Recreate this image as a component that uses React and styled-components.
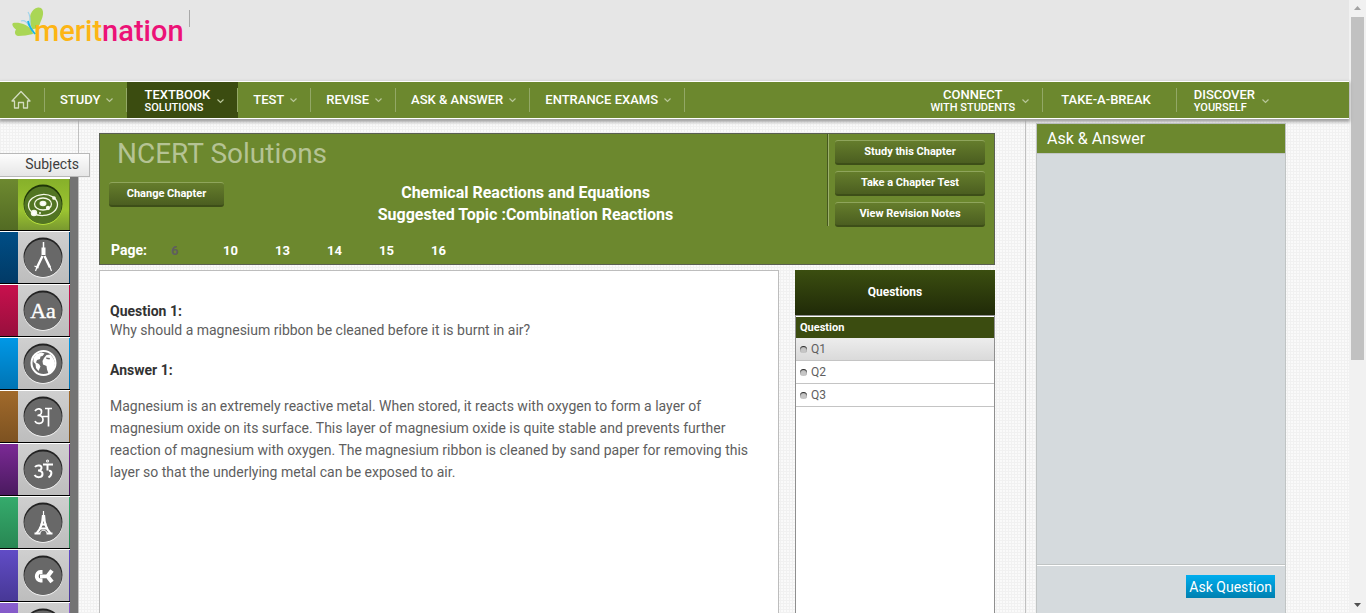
import React from "react";
import styled, { createGlobalStyle, css } from "styled-components";

const green = "#6c882e";
const darkGreen = "#3b4c10";

const Global = createGlobalStyle`
  *, *::before, *::after { box-sizing: border-box; }
  html, body { margin: 0; padding: 0; }
  body { font-family: Roboto, "Liberation Sans", sans-serif; font-size: 14px; color: #5e5e5e; overflow: hidden; }
  button { font-family: inherit; cursor: pointer; }
  a { color: inherit; text-decoration: none; }
`;

const Window = styled.div`
  display: flex;
  height: 100vh;
  overflow: hidden;
`;

const Page = styled.div`
  flex: 1;
  min-width: 0;
  display: flex;
  flex-direction: column;
  background-color: #fafafa;
  background-image: linear-gradient(#f1f1f1 1px, transparent 1px),
    linear-gradient(90deg, #f1f1f1 1px, transparent 1px);
  background-size: 3px 3px;
`;

/* ---------- header ---------- */

const Header = styled.header`
  flex: none;
  display: flex;
  align-items: flex-start;
  height: 81px;
  padding: 7px 12px;
  background: #e6e6e6;
`;

const LogoLink = styled.a`
  display: flex;
  align-items: flex-start;
`;

const Butterfly = styled.svg`
  flex: none;
  width: 36px;
  height: 36px;
  margin-right: -14px;
`;

const Wordmark = styled.span`
  position: relative;
  font-size: 29px;
  font-weight: 500;
  line-height: 48px;
  color: #fdb515;
`;

const WordmarkEnd = styled.span`
  color: #ec1277;
`;

const LogoRule = styled.span`
  width: 1px;
  height: 17px;
  margin: 3px 0 0 5px;
  background: #a8a8a8;
`;

/* ---------- navigation ---------- */

const Nav = styled.nav`
  flex: none;
  display: flex;
  justify-content: space-between;
  height: 38px;
  padding-right: 66px;
  background: ${green};
  border-top: 1px solid #fff;
  border-bottom: 1px solid #fff;
  box-shadow: 0 2px 3px 1px #a2a2a2;
  z-index: 1;
`;

const NavGroup = styled.div`
  display: flex;
`;

const NavItem = styled.a`
  position: relative;
  display: flex;
  align-items: center;
  gap: 6px;
  height: 36px;
  padding: 0 14px 1px 15px;
  color: #fff;
  font-size: 13px;
  font-weight: 500;
  line-height: 13px;
  white-space: nowrap;
  &::after {
    content: "";
    position: absolute;
    right: 0;
    top: 6px;
    width: 1px;
    height: 24px;
    background: #93a866;
  }
  ${(p) => p.$wide && css`gap: 7px; padding: 2px 14px 0 17px;`}
  ${(p) => p.$plain && css`padding: 0 26px 1px 18px;`}
  ${(p) => p.$home && css`padding: 0 13px 0 11px;`}
  ${(p) => p.$last && css`&::after { display: none; }`}
  ${(p) => p.$active && css`background: ${darkGreen};`}
`;

const NavText = styled.span`
  text-align: ${(p) => (p.$center ? "center" : "left")};
`;

const NavSub = styled.small`
  display: block;
  font-size: 11px;
  line-height: 14px;
`;

const Chevron = () => (
  <svg width="7" height="6" viewBox="0 0 7 6" aria-hidden="true">
    <path d="M0.5 1.5 L3.5 4.5 L6.5 1.5" fill="none" stroke="#b9c79a" strokeWidth="1.2" />
  </svg>
);

/* ---------- body columns ---------- */

const Columns = styled.div`
  flex: 1;
  min-height: 0;
  display: flex;
  padding-right: 63px;
`;

const SubjectsColumn = styled.aside`
  flex: none;
  width: 79px;
  padding-top: 34px;
  border-right: 1px solid #c0c0c0;
`;

const SubjectsTab = styled.h2`
  position: relative;
  width: 90px;
  height: 24px;
  margin: 0;
  padding-right: 10px;
  border: 1px solid #b8b8b8;
  border-left: 0;
  background: linear-gradient(#fdfdfd, #e6e6e6);
  color: #3d3d3d;
  font-size: 14px;
  font-weight: 400;
  line-height: 21px;
  text-align: right;
`;

const SubjectList = styled.ul`
  margin: 0;
  padding: 2px 8px 0 0;
  list-style: none;
  background: linear-gradient(90deg, #fff 70px, #747474 70px);
`;

const SubjectLink = styled.a`
  display: flex;
  height: 52px;
  margin-bottom: 1px;
  border-bottom: 1px solid #000;
  background: ${(p) => p.$fill};
`;

const SubjectIcon = styled.svg`
  width: 51px;
  height: 51px;
  margin-left: 18px;
  background: ${(p) =>
    p.$active
      ? "linear-gradient(#86b02a, #9cc531 60%, #79992f)"
      : "linear-gradient(#cfcfcf, #bdbdbd)"};
`;

const Main = styled.main`
  flex: 1;
  min-width: 0;
  display: flex;
  flex-direction: column;
  gap: 5px;
  padding: 14px 30px 0 20px;
`;

/* ---------- chapter banner ---------- */

const Banner = styled.section`
  flex: none;
  display: flex;
  align-items: flex-start;
  height: 132px;
  border: 1px solid #5a5f52;
  background: ${green};
  color: #fff;
`;

const BannerInfo = styled.div`
  flex: 1;
  padding: 0 0 0 9px;
`;

const BannerTitle = styled.h1`
  margin: 0;
  padding-left: 8px;
  color: #b5c394;
  font-size: 28px;
  font-weight: 400;
  line-height: 40px;
`;

const BannerRow = styled.div`
  display: flex;
  align-items: flex-start;
  padding-top: 8px;
`;

const Topic = styled.h2`
  flex: 1;
  margin: 0;
  font-size: 16px;
  font-weight: 700;
  line-height: 22px;
  text-align: center;
`;

const Pages = styled.div`
  display: flex;
  align-items: baseline;
  padding: 13px 0 0 2px;
  font-weight: 700;
  line-height: 22px;
`;

const PagesLabel = styled.span`
  width: 60px;
`;

const PageLink = styled.a`
  width: 52px;
  font-size: 13px;
  color: ${(p) => (p.$current ? "#5f5f5f" : "#fff")};
`;

const BannerActions = styled.div`
  display: flex;
  flex-direction: column;
  gap: 6px;
  height: 92px;
  padding: 6px 9px 0 7px;
  border-left: 1px solid #46581e;
  box-shadow: inset 1px 0 #9cb06c;
`;

const GreenButton = styled.button`
  flex: none;
  width: ${(p) => (p.$narrow ? "115px" : "150px")};
  height: 25px;
  padding: 0;
  border: 0;
  border-top: 1px solid #8fa55c;
  border-bottom: 2px solid #3d4e18;
  border-radius: 3px;
  background: linear-gradient(#657d2c, #4b5e20);
  color: #fff;
  font-size: 11px;
  font-weight: 700;
  line-height: 22px;
`;

/* ---------- question and answer ---------- */

const Work = styled.div`
  flex: 1;
  min-height: 0;
  display: flex;
  gap: 16px;
`;

const Solution = styled.article`
  flex: 1;
  min-width: 0;
  padding: 31px 10px 0;
  border: 1px solid #bdbdbd;
  border-bottom: 0;
  background: #fff;
  line-height: 19px;
`;

const SolutionTitle = styled.h3`
  margin: 0;
  color: #333;
  font-size: 14px;
  font-weight: 700;
`;

const QuestionText = styled.p`
  margin: 0 0 21px;
`;

const AnswerText = styled.p`
  max-width: 640px;
  margin: 15px 0 0;
  line-height: 22px;
`;

const QuestionPanel = styled.section`
  flex: none;
  width: 200px;
  display: flex;
  flex-direction: column;
`;

const QuestionPanelTitle = styled.h2`
  margin: 0;
  background: linear-gradient(#3b4e10, #202a08);
  color: #fff;
  font-size: 12px;
  font-weight: 700;
  line-height: 45px;
  text-align: center;
`;

const QuestionPanelBody = styled.div`
  flex: 1;
  padding-top: 1px;
  border: 1px solid #8f8f8f;
  border-bottom: 0;
  background: #fff;
`;

const QuestionTable = styled.table`
  width: 100%;
  border-collapse: separate;
  border-spacing: 0;
`;

const QuestionHead = styled.th`
  height: 21px;
  padding: 0 4px;
  background: ${darkGreen};
  color: #fff;
  font-size: 11px;
  font-weight: 700;
  text-align: left;
`;

const QuestionCell = styled.td`
  height: 23px;
  padding: 0 4px;
  border-bottom: 1px solid #c4c4c4;
  background: ${(p) => (p.$selected ? "linear-gradient(#ededed, #dadada)" : "#fff")};
  font-size: 12px;
  line-height: 20px;
`;

const QuestionLabel = styled.label`
  display: flex;
  align-items: center;
  gap: 4px;
`;

const Bullet = styled.input`
  appearance: none;
  width: 7px;
  height: 7px;
  margin: 0;
  border-radius: 50%;
  background: #c6c6c6;
  box-shadow: inset 0 1px 1px #222;
`;

/* ---------- ask & answer ---------- */

const AskColumn = styled.aside`
  flex: none;
  display: flex;
  padding: 4px 0 0 10px;
  border-left: 1px solid #c0c0c0;
`;

const AskPanel = styled.section`
  display: flex;
  flex-direction: column;
  width: 250px;
  border: 1px solid #c0c4c4;
  border-bottom: 0;
  background: #d5dadd;
`;

const AskTitle = styled.h2`
  margin: 0;
  padding-left: 10px;
  border-bottom: 1px solid #c0c4c4;
  background: ${green};
  color: #fff;
  font-size: 16px;
  font-weight: 400;
  line-height: 29px;
`;

const AskFeed = styled.div`
  flex: 1;
`;

const AskFooter = styled.div`
  display: flex;
  align-items: flex-start;
  justify-content: flex-end;
  height: 49px;
  padding: 10px 10px 0;
  border-top: 1px solid #c0c4c4;
  box-shadow: inset 0 1px #fff;
`;

const AskButton = styled.button`
  height: 23px;
  padding: 0 3px;
  border: 0;
  background: linear-gradient(#00aeef, #0080b0);
  color: #fff;
  font-size: 14px;
  line-height: 22px;
`;

/* ---------- window scroll bar ---------- */

const ScrollTrack = styled.div`
  flex: none;
  display: flex;
  flex-direction: column;
  align-items: center;
  justify-content: space-between;
  width: 17px;
  background: #f1f1f1;
`;

const ScrollThumb = styled.div`
  width: 13px;
  height: 56vh;
  margin-bottom: auto;
  background: #c1c1c1;
`;

const ScrollArrow = ({ down }) => (
  <svg width="17" height="17" viewBox="0 0 17 17" aria-hidden="true">
    <path d={down ? "M5 7h7l-3.500 4z" : "M5 10h7l-3.500-4z"} fill={down ? "#505050" : "#a3a3a3"} />
  </svg>
);

/* ---------- data ---------- */

const glyphs = {
  orbit: (
    <g fill="none" stroke="#f4f8e6" strokeWidth="1.3">
      <ellipse cx="25" cy="26" rx="14.500" ry="10.500" transform="rotate(-4 25 26)" />
      <ellipse cx="25" cy="25" rx="8.500" ry="6" />
      <ellipse cx="25" cy="24.500" rx="2.800" ry="2" fill="#fff" />
      <circle cx="16" cy="34" r="2.600" fill="#fff" />
      <circle cx="36" cy="19" r="1.200" fill="#fff" />
      <circle cx="30" cy="29" r="1.500" fill="#fff" />
      <circle cx="22" cy="34" r="0.400" fill="#fff" />
    </g>
  ),
  compass: (
    <g fill="none" stroke="#fff">
      <path d="M25.500 10v6" strokeWidth="1.500" />
      <path d="M25.500 15.500v7.500" strokeWidth="4" />
      <path d="M24.500 24l-5.500 11.500M26.500 24l5.500 11.500" strokeWidth="2.400" />
      <path d="M19 35l-1.500 4M32 35l1.500 4M16.500 34l4 2" strokeWidth="1.200" />
    </g>
  ),
  latin: (
    <text x="25" y="33" textAnchor="middle" fill="#fff" stroke="#fff" strokeWidth="0.4" fontFamily="Liberation Serif, serif" fontSize="22">Aa</text>
  ),
  globe: (
    <g>
      <circle cx="25.500" cy="25" r="12" fill="#6b6b6b" stroke="#fff" strokeWidth="2" />
      <path
        fill="#fff"
        d="M15.500 20l3-4 5-1.500 3 1-2 2.500-2 .500-.500 2.500-3 1-1 2.500 3 1.500 1.500 2.500-2 4.500-2.500-3-.500-4-2-2zM26 20l2.500-3 4-.500 3 4 1.500 4.500-1 5-3.500 4.500-2 1-1.500-4-.500-3.500-3.500-1.500-.500-3.500z"
      />
      <path fill="#6b6b6b" d="M28 19.500l4 .5-.5 1.500-3-.5z" />
    </g>
  ),
  hindi: (
    <g fill="none" stroke="#fff" strokeWidth="1.700">
      <path d="M17 20c2-3.500 7-2.500 6.500 1 0 2-2 3.500-4 3.500 3-.5 5.500 1 5.500 4 0 5-6.500 5-8 1.500M24.500 25.500h6M30.500 17.500v18M27 17.500h7" />
    </g>
  ),
  sanskrit: (
    <g fill="none" stroke="#fff" strokeWidth="2">
      <path d="M17 23c2-2.500 7-2 6.500 1 0 1.500-2 2.500-3.500 2.500 2.500 0 4.500 1 4.500 3.500 0 4-6 4-8 1M25 20.500h10M29.500 21v5.500M31 27c3-1 3.500 4-.5 6.500" />
      <circle cx="29.500" cy="17" r=".500" />
    </g>
  ),
  tower: (
    <g fill="none" stroke="#fff">
      <path d="M25.500 14v5" strokeWidth="1.200" />
      <path d="M25 18c-.5 8-1.500 13-6.500 18.500M26 18c.5 8 1.500 13 6.500 18.500" strokeWidth="2.200" />
      <path d="M21 31.500h9M16.500 36.500h6M28.500 36.500h6M22.500 27.500h6" strokeWidth="1.800" />
      <path d="M22 36c.500-3.500 6.500-3.500 7 0" strokeWidth="1" />
    </g>
  ),
  gk: (
    <g fill="none" stroke="#fff" strokeWidth="3.800">
      <path d="M24.500 22h-2c-5 0-5 8.500 0 8.500h2M22 26.300h6" />
      <path d="M34 20.500l-4.500 5.800 4.500 5.700" strokeWidth="4.200" />
    </g>
  ),
};

const subjects = [
  { name: "Science", icon: "orbit", fill: "linear-gradient(#6d8930, #536b23)", active: true },
  { name: "Maths", icon: "compass", fill: "linear-gradient(#004e86, #013a66)" },
  { name: "English", icon: "latin", fill: "linear-gradient(#c8104d, #980f3d)" },
  { name: "Social Science", icon: "globe", fill: "linear-gradient(#0098e6, #0074b4)" },
  { name: "Hindi", icon: "hindi", fill: "linear-gradient(#a16a2b, #7d5221)" },
  { name: "Sanskrit", icon: "sanskrit", fill: "linear-gradient(#7b2995, #4a1a5f)" },
  { name: "French", icon: "tower", fill: "linear-gradient(#35ab6c, #288753)" },
  { name: "General Knowledge", icon: "gk", fill: "linear-gradient(#614cc6, #473896)" },
  { name: "More", fill: "linear-gradient(#8a5fd0, #6a45a8)" },
];

const actions = ["Study this Chapter", "Take a Chapter Test", "View Revision Notes"];
const pages = [6, 10, 13, 14, 15, 16];
const questions = ["Q1", "Q2", "Q3"];

function Subject({ name, icon, fill, active }) {
  return (
    <li>
      <SubjectLink href="#" $fill={fill} aria-label={name}>
        <SubjectIcon viewBox="0 0 51 51" $active={active} aria-hidden="true">
          <circle cx="25" cy="26.500" r="19.500" fill={active ? "#b5dd3c" : "#eeeeee"} />
          <circle cx="25" cy="25" r="19.500" fill={active ? "#1e3508" : "#222"} />
          <circle cx="25" cy="26.200" r="18.800" fill={active ? "#527523" : "#686868"} />
          {glyphs[icon]}
        </SubjectIcon>
      </SubjectLink>
    </li>
  );
}

export default function App() {
  return (
    <Window>
      <Global />
      <Page>
        <Header>
          <LogoLink href="#">
            <Butterfly viewBox="0 0 36 36" aria-hidden="true">
              <path fill="#aad655" d="M19 19C16 10 19 2 26 .500c4-.500 5.500 3 5 7-.500 4-2.500 7-3 9-1 4-4 5-7.500 6z" />
              <path fill="#aad655" d="M20 23C15 17 7 15 1 16c-2 2 1 5 3 6.500-2 3-1 6 2 6.500 5 0 10-1 15-2z" />
              <path fill="none" stroke="#9fd4ea" strokeWidth="1.200" d="M18 20c0-5 1-11-2-15M17 19c-2-4-5-6-8-5" />
              <path fill="none" stroke="#18b4e8" strokeWidth="1.800" d="M16 14c1 6 4 9 7 13" />
            </Butterfly>
            <Wordmark>
              merit<WordmarkEnd>nation</WordmarkEnd>
            </Wordmark>
          </LogoLink>
          <LogoRule />
        </Header>

        <Nav>
          <NavGroup>
            <NavItem href="#" $home aria-label="Home">
              <svg width="21" height="20" viewBox="0 0 21 20" aria-hidden="true">
                <path d="M1 11L10 1.500l9 9.500h-2.500v7h-4v-5.500h-5V18h-4v-7z" fill="none" stroke="#d3dcc0" strokeWidth="1.300" strokeLinejoin="round" />
              </svg>
            </NavItem>
            <NavItem href="#">STUDY<Chevron /></NavItem>
            <NavItem href="#" $wide $active>
              <NavText>TEXTBOOK<NavSub>SOLUTIONS</NavSub></NavText>
              <Chevron />
            </NavItem>
            <NavItem href="#">TEST<Chevron /></NavItem>
            <NavItem href="#">REVISE<Chevron /></NavItem>
            <NavItem href="#">ASK &amp; ANSWER<Chevron /></NavItem>
            <NavItem href="#">ENTRANCE EXAMS<Chevron /></NavItem>
          </NavGroup>
          <NavGroup>
            <NavItem href="#" $wide>
              <NavText $center>CONNECT<NavSub>WITH STUDENTS</NavSub></NavText>
              <Chevron />
            </NavItem>
            <NavItem href="#" $plain>TAKE-A-BREAK</NavItem>
            <NavItem href="#" $wide $last>
              <NavText>DISCOVER<NavSub>YOURSELF</NavSub></NavText>
              <Chevron />
            </NavItem>
          </NavGroup>
        </Nav>

        <Columns>
          <SubjectsColumn>
            <SubjectsTab>Subjects</SubjectsTab>
            <SubjectList>
              {subjects.map((s) => <Subject key={s.name} {...s} />)}
            </SubjectList>
          </SubjectsColumn>

          <Main>
            <Banner>
              <BannerInfo>
                <BannerTitle>NCERT Solutions</BannerTitle>
                <BannerRow>
                  <GreenButton type="button" $narrow>Change Chapter</GreenButton>
                  <Topic>
                    Chemical Reactions and Equations<br />
                    Suggested Topic :Combination Reactions
                  </Topic>
                </BannerRow>
                <Pages>
                  <PagesLabel>Page:</PagesLabel>
                  {pages.map((n, i) => (
                    <PageLink key={n} href="#" $current={i === 0}>{n}</PageLink>
                  ))}
                </Pages>
              </BannerInfo>
              <BannerActions>
                {actions.map((label) => (
                  <GreenButton key={label} type="button">{label}</GreenButton>
                ))}
              </BannerActions>
            </Banner>

            <Work>
              <Solution>
                <SolutionTitle>Question 1:</SolutionTitle>
                <QuestionText>Why should a magnesium ribbon be cleaned before it is burnt in air?</QuestionText>
                <SolutionTitle>Answer 1:</SolutionTitle>
                <AnswerText>
                  Magnesium is an extremely reactive metal. When stored, it reacts with oxygen to form a layer of
                  magnesium oxide on its surface. This layer of magnesium oxide is quite stable and prevents further
                  reaction of magnesium with oxygen. The magnesium ribbon is cleaned by sand paper for removing this
                  layer so that the underlying metal can be exposed to air.
                </AnswerText>
              </Solution>
              <QuestionPanel>
                <QuestionPanelTitle>Questions</QuestionPanelTitle>
                <QuestionPanelBody>
                  <QuestionTable>
                    <thead>
                      <tr><QuestionHead scope="col">Question</QuestionHead></tr>
                    </thead>
                    <tbody>
                      {questions.map((q, i) => (
                        <tr key={q}>
                          <QuestionCell $selected={i === 0}>
                            <QuestionLabel>
                              <Bullet type="radio" name="question" defaultChecked={i === 0} />
                              {q}
                            </QuestionLabel>
                          </QuestionCell>
                        </tr>
                      ))}
                    </tbody>
                  </QuestionTable>
                </QuestionPanelBody>
              </QuestionPanel>
            </Work>
          </Main>

          <AskColumn>
            <AskPanel>
              <AskTitle>Ask &amp; Answer</AskTitle>
              <AskFeed />
              <AskFooter>
                <AskButton type="button">Ask Question</AskButton>
              </AskFooter>
            </AskPanel>
          </AskColumn>
        </Columns>
      </Page>

      <ScrollTrack aria-hidden="true">
        <ScrollArrow />
        <ScrollThumb />
        <ScrollArrow down />
      </ScrollTrack>
    </Window>
  );
}
